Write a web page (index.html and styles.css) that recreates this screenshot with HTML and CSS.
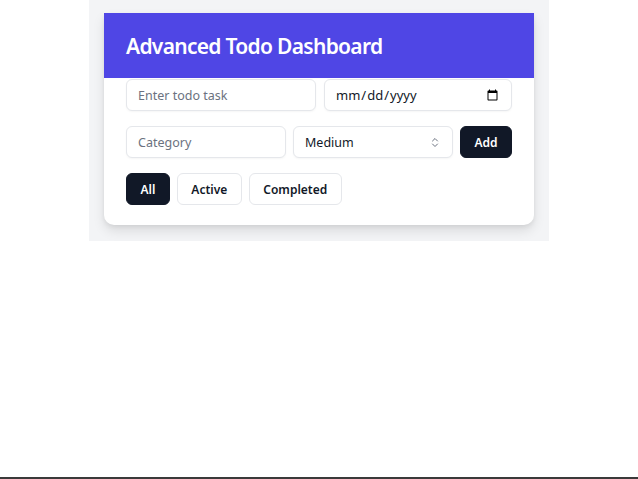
FILE: index.html
```html
<!DOCTYPE html>
<html lang="en">
<head>
<meta charset="utf-8">
<title>Advanced Todo Dashboard</title>
<link rel="stylesheet" href="styles.css">
</head>
<body>
<div class="page">
  <div class="shell">
    <div class="card">
      <header class="card-header">
        <h1 class="title">Advanced Todo Dashboard</h1>
      </header>
      <div class="card-body">
        <div class="row row-two">
          <input class="field" type="text" placeholder="Enter todo task">
          <input class="field date" type="date">
        </div>
        <div class="row row-three">
          <input class="field" type="text" placeholder="Category">
          <div class="select-wrap">
            <select class="field select">
              <option>Low</option>
              <option selected>Medium</option>
              <option>High</option>
            </select>
            <svg class="chevrons" width="8" height="11" viewBox="0 0 8 11" fill="none" stroke="#6b7280" stroke-width="1" stroke-linecap="round" stroke-linejoin="round"><path d="M1.5 4 L4 1.5 L6.5 4"/><path d="M1.5 7 L4 9.5 L6.5 7"/></svg>
          </div>
          <button class="btn btn-dark add">Add</button>
        </div>
        <div class="filters">
          <button class="btn btn-dark">All</button>
          <button class="btn btn-light">Active</button>
          <button class="btn btn-light">Completed</button>
        </div>
      </div>
    </div>
  </div>
  <div class="bottom-line"></div>
</div>
</body>
</html>
```
FILE: styles.css
```css
* { box-sizing: border-box; }
html, body { margin: 0; padding: 0; height: 100%; }
body {
  font-family: "Noto Sans", "Open Sans", sans-serif;
  color: #111827;
  background: #ffffff;
}
.page {
  min-height: 100%;
  display: flex;
  flex-direction: column;
}
.shell {
  width: 460px;
  margin-left: 89px;
  background: #f3f4f6;
  padding: 13px 15px 16px;
}
.card {
  background: #ffffff;
  border-radius: 0 0 10px 10px;
  box-shadow: 0 6px 12px rgba(0,0,0,0.10), 0 2px 4px rgba(0,0,0,0.06);
}
.card-header {
  background: #4f46e5;
  height: 65px;
  padding: 0 22px;
  display: flex;
  align-items: center;
}
.title {
  margin: 0;
  color: #ffffff;
  font-size: 21px;
  font-weight: 600;
  letter-spacing: -0.7px;
}
.card-body {
  padding: 1px 22px 20px;
  display: flex;
  flex-direction: column;
  gap: 15px;
}
.row {
  display: flex;
  gap: 8px;
}
.row-two .field { flex: 1 1 0; }
.row-three { gap: 7px; }
.row-three > .field, .row-three > .select-wrap { width: 160px; }
.field {
  height: 32px;
  border: 1px solid #e5e7eb;
  border-radius: 6px;
  padding: 0 11px;
  font-family: inherit;
  font-size: 12.5px;
  color: #111827;
  background: #ffffff;
  box-shadow: 0 1px 2px rgba(0,0,0,0.04);
  outline: none;
  min-width: 0;
}
.field::placeholder { color: #6b7280; }
.date { padding: 0 10px; font-size: 13px; }
.select-wrap { position: relative; }
.select {
  width: 100%;
  appearance: none;
  -webkit-appearance: none;
}
.chevrons {
  position: absolute;
  right: 14px;
  top: 11px;
  pointer-events: none;
}
.btn {
  height: 32px;
  border-radius: 6px;
  font-family: inherit;
  font-size: 12px;
  font-weight: 600;
  padding: 0 13.5px;
  cursor: pointer;
}
.btn-dark {
  background: #111827;
  color: #ffffff;
  border: 1px solid #111827;
}
.btn-light {
  background: #ffffff;
  color: #111827;
  border: 1px solid #e5e7eb;
}
.add { width: 52px; padding: 0; }
.filters {
  display: flex;
  gap: 7px;
}
.bottom-line {
  margin-top: auto;
  height: 2px;
  background: #3a3a3a;
}
```
